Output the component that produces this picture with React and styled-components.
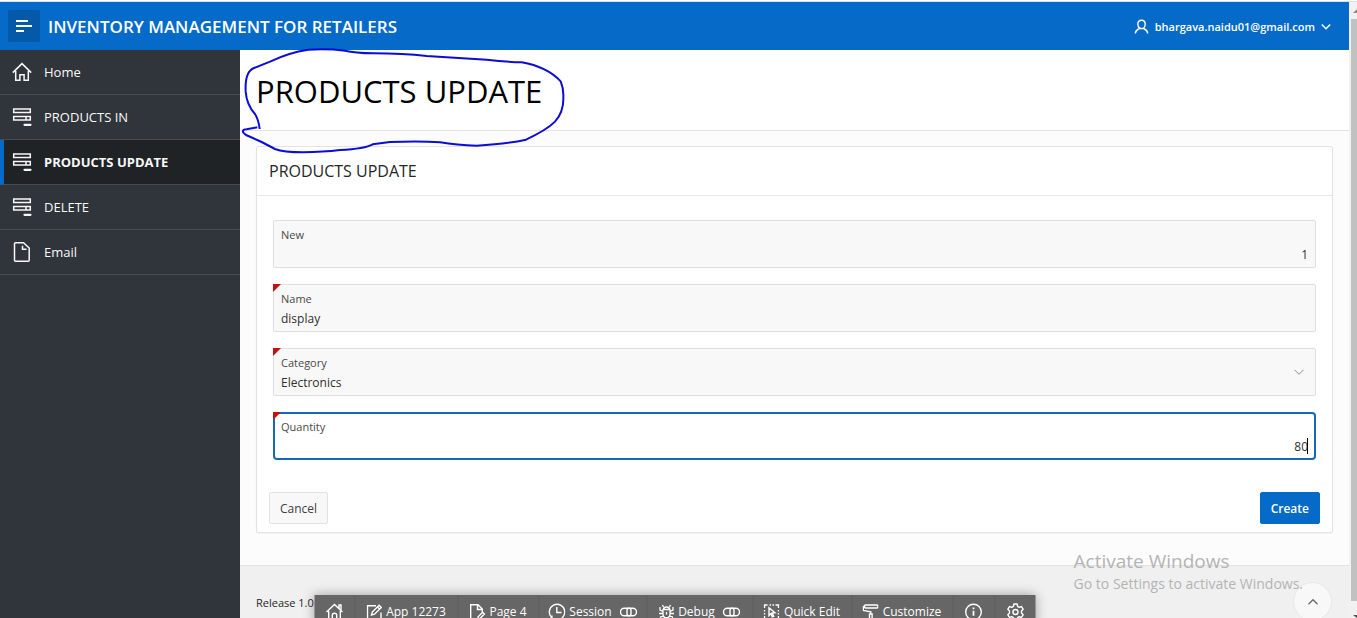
import React from "react";
import styled, { createGlobalStyle } from "styled-components";

const Global = createGlobalStyle`
  *, *::before, *::after { box-sizing: border-box; }
  html, body { margin: 0; height: 100%; overflow: hidden; }
  body { background: #fff; color: #262626; font: 12px/16px "Open Sans", "Noto Sans", sans-serif; }
  button, input, select { font: inherit; color: inherit; margin: 0; }
`;

const Window = styled.div`
  position: relative;
  display: flex;
  height: 100vh;
  overflow: hidden;
  border-top: 1px solid #fff;
`;

const Page = styled.div`
  position: relative;
  flex: 1;
  min-width: 0;
  display: flex;
  flex-direction: column;
  border-top: 1px solid #d5e2ef;
`;

const ScrollBar = styled.div`
  width: 8px;
  display: flex;
  flex-direction: column;
  align-items: flex-end;
  background: #f1f1f1;
  border-top: 1px solid #dcdcdc;
  overflow: hidden;
`;

const ScrollArrow = styled.svg`
  display: block;
  width: 6px;
  height: 17px;
  flex: none;
`;

const ScrollThumb = styled.div`
  width: 6px;
  flex: 1;
  background: #c1c1c1;
`;

const Header = styled.header`
  height: 48px;
  flex: none;
  display: flex;
  align-items: center;
  gap: 8px;
  padding: 0 18px 0 8px;
  background: #056ac8;
  color: #fff;
`;

const MenuButton = styled.button`
  width: 32px;
  height: 32px;
  padding: 0;
  display: grid;
  place-items: center;
  border: 0;
  border-radius: 2px;
  background: #0459a8;
  color: #fff;
`;

const AppTitle = styled.a`
  flex: 1;
  padding-top: 2px;
  color: #fff;
  text-decoration: none;
  font-size: 17px;
  line-height: 24px;
  font-weight: 600;
  white-space: nowrap;
`;

const UserButton = styled.button`
  display: flex;
  align-items: center;
  gap: 6px;
  padding: 2px 0 0;
  border: 0;
  background: none;
  color: #fff;
  font-size: 11px;
  font-weight: 600;
`;

const Body = styled.div`
  flex: 1;
  min-height: 0;
  display: flex;
`;

const Sidebar = styled.nav`
  width: 240px;
  flex: none;
  background: #30343b;
`;

const NavLink = styled.a`
  display: flex;
  align-items: center;
  gap: 12px;
  height: 45px;
  padding-left: ${(p) => (p.$active ? 8 : 12)}px;
  border-left: ${(p) => (p.$active ? "4px solid #056ac8" : "0")};
  border-bottom: 1px solid #484c52;
  background: ${(p) => (p.$active ? "#1f2326" : "transparent")};
  color: #f8f8f8;
  font-size: 13px;
  line-height: 20px;
  font-weight: ${(p) => (p.$active ? 700 : 500)};
  text-decoration: none;
`;

const Main = styled.main`
  position: relative;
  flex: 1;
  min-width: 0;
  display: flex;
  flex-direction: column;
  background: #fcfcfc;
`;

const TitleBar = styled.div`
  flex: none;
  height: 81px;
  display: flex;
  align-items: center;
  padding: 2px 16px 0;
  background: #fff;
  border-bottom: 1px solid #e3e3e3;
`;

const PageTitle = styled.h1`
  margin: 0;
  color: #000;
  font-size: 31px;
  line-height: 40px;
  font-weight: 500;
`;

const InkLoop = styled.svg`
  position: absolute;
  left: 0;
  top: -10px;
  width: 340px;
  height: 170px;
  pointer-events: none;
`;

const Content = styled.div`
  flex: none;
  padding: 15px 16px 32px;
`;

const Card = styled.section`
  background: #fff;
  border: 1px solid #e3e3e3;
  border-radius: 2px;
  box-shadow: 0 1px 2px rgba(0, 0, 0, 0.04);
`;

const CardTitle = styled.h2`
  margin: 0;
  padding: 12px;
  border-bottom: 1px solid #e8e8e8;
  font-size: 16px;
  line-height: 24px;
  font-weight: 500;
`;

const Fields = styled.form`
  display: flex;
  flex-direction: column;
  gap: 16px;
  padding: 24px 16px;
`;

const Field = styled.div`
  position: relative;
  height: 48px;
  display: flex;
  flex-direction: column;
  padding: ${(p) => (p.$focused ? "5px 6px 0" : "6px 7px 0")};
  border: ${(p) => (p.$focused ? "2px solid #1469b8" : "1px solid #dfdfdf")};
  border-radius: ${(p) => (p.$focused ? 4 : 2)}px;
  background: ${(p) => (p.$focused ? "#fff" : "#f8f8f8")};
`;

const RequiredMark = styled.span`
  position: absolute;
  left: ${(p) => (p.$focused ? -2 : -1)}px;
  top: ${(p) => (p.$focused ? -2 : -1)}px;
  border-top: 8px solid #c40f0f;
  border-right: 8px solid transparent;
`;

const Label = styled.label`
  font-size: 11px;
  line-height: 16px;
  color: #4a4a4a;
`;

const fieldControl = `
  width: 100%;
  height: 20px;
  margin-top: 2px;
  padding: 0;
  border: 0;
  outline: 0;
  background: transparent;
  appearance: none;
  font-size: 12px;
  line-height: 20px;
  color: #303030;
`;

const Input = styled.input`
  ${fieldControl}
  text-align: ${(p) => (p.$numeric ? "right" : "left")};
`;

const Select = styled.select`
  ${fieldControl}
`;

const SelectArrow = styled.svg`
  position: absolute;
  right: 11px;
  top: 19px;
  width: 10px;
  height: 8px;
  pointer-events: none;
`;

const Caret = styled.span`
  position: absolute;
  right: 6px;
  bottom: 4px;
  width: 1px;
  height: 16px;
  background: #000;
`;

const Actions = styled.div`
  display: flex;
  justify-content: space-between;
  padding: 8px 12px;
`;

const Button = styled.button`
  height: 32px;
  min-width: 59px;
  padding: 2px 10px 0;
  border: 1px solid ${(p) => (p.$primary ? "#056ac8" : "#e2e2e2")};
  border-radius: 2px;
  background: ${(p) => (p.$primary ? "#056ac8" : "#f8f8f8")};
  color: ${(p) => (p.$primary ? "#fff" : "#404040")};
  font-weight: ${(p) => (p.$primary ? 600 : 400)};
`;

const Footer = styled.footer`
  flex: 1 0 auto;
  padding: 29px 16px;
  background: #f0f0f0;
  border-top: 1px solid #e2e2e2;
  font-size: 11px;
`;

const TopButton = styled.button`
  position: absolute;
  right: 17px;
  bottom: -3px;
  width: 39px;
  height: 39px;
  padding: 0;
  display: grid;
  place-items: center;
  border: 1px solid #e8e8e8;
  border-radius: 50%;
  background: #f8f8f8;
  color: #6a6a6a;
`;

const Watermark = styled.div`
  position: absolute;
  right: 46px;
  bottom: 24px;
  color: #b4b4b4;
  font-size: 14px;
  line-height: 20px;
  white-space: nowrap;
  pointer-events: none;
`;

const WatermarkTitle = styled.div`
  font-size: 19px;
  line-height: 26px;
`;

const DevBar = styled.div`
  position: absolute;
  left: 50%;
  bottom: -10px;
  transform: translateX(-50%);
  display: flex;
  height: 33px;
  background: #666;
  box-shadow: 0 0 12px rgba(0, 0, 0, 0.35);
`;

const DevButton = styled.button`
  display: flex;
  align-items: center;
  justify-content: center;
  gap: 4px;
  min-width: ${(p) => p.$width}px;
  padding: 0;
  border: 0;
  border-right: 1px solid #5c5c5c;
  background: none;
  color: #fff;
  font-weight: 500;
  white-space: nowrap;
  &:last-child { border-right: 0; }
`;

const ToggleSlot = styled.span`
  display: flex;
  margin-left: 4px;
`;

const Svg = ({ w = 18, h = w, sw = 1, children }) => (
  <svg width={w} height={h} viewBox={`0 0 ${w} ${h}`} fill="none" stroke="currentColor" strokeWidth={sw} aria-hidden="true">
    {children}
  </svg>
);

const HomeIcon = () => (
  <Svg w={20} sw={1.5}>
    <path d="M.8 10.6 10 1.6l9.2 9M3.7 9v9.3h4.2v-5.600h4.200v5.600h4.200V9" />
  </Svg>
);

const FormIcon = () => (
  <Svg w={20} sw={1.5}>
    <path d="M1.700 2h16.600v3.600H1.700zM1.700 9.600h16.600v3.400H1.700zM14 9.600V13" />
    <path d="M12.500 17.800h6" strokeWidth="2.2" strokeLinecap="round" />
  </Svg>
);

const FileIcon = () => (
  <Svg w={20} sw={1.5}>
    <path d="M3.500 .8h8L17.200 6v12.200q0 1-1 1H3.500q-1 0-1-1V1.800q0-1 1-1z" />
    <path d="M10.500 3.800v3.400h4" />
  </Svg>
);

const UserIcon = () => (
  <Svg w={15} h={16} sw={1.4}>
    <path d="M7.500 1.200c2.300 0 3.700 1.500 3.700 3.800 0 2.500-1.500 4.600-3.700 4.600S3.800 7.500 3.800 5c0-2.300 1.400-3.800 3.700-3.800zM5.500 9.300C3.500 10.300 1.500 11 1.300 14.500M9.500 9.300c2 1 4 1.700 4.200 5.200" />
  </Svg>
);

const DevHome = () => (
  <Svg sw={1.4}>
    <path d="m1 9 8-7.500L17 9M13.500 5.500V2h2v5.500M3.200 8v9.200h3.600v-5q0-2 2.200-2t2.200 2v5h3.600V8" />
  </Svg>
);

const EditIcon = () => (
  <Svg w={16} sw={1.4}>
    <path d="M9.500 1.700H1v13.500h13.500V8.500M5 11l.8-3 6.800-6.800 2.200 2.200L8 10.200zM11 3l2 2" />
  </Svg>
);

const PageIcon = () => (
  <Svg w={16} sw={1.4}>
    <path d="M6.500 15.300H1.200V.8h7.300L12.800 5v3M8 1v4.500h4.500M8 15.300l.6-2.500 4.500-4.500 1.800 1.800-4.500 4.500z" />
  </Svg>
);

const SessionIcon = () => (
  <Svg w={18} sw={1.4}>
    <path d="M4.200 14.600A7.700 7.700 0 1 1 8 16.600M9.300 4v5.500H14M1 16.800h3.400v-4.300" />
  </Svg>
);

const BugIcon = () => (
  <Svg w={16} sw={1.3}>
    <path d="M4.500 5.500h7V10q0 3.800-3.500 3.800T4.500 10zM5 5.500Q5 3 8 3t3 2.500M5 3 4 1M11 3l1-2M4.500 7.500 1.500 6V3M11.500 7.500l3-1.500V3M4.500 9.500H.5M11.500 9.500h4M5 12l-3 1v2.500M11 12l3 1v2.500M8 8v2.500" />
  </Svg>
);

const ToggleIcon = () => (
  <ToggleSlot>
    <Svg w={18} h={10} sw={1.4}>
      <rect x="1" y="1.2" width="16" height="7.6" rx="3.8" />
      <rect x="7.5" y="1.2" width="4" height="7.6" rx="2" />
    </Svg>
  </ToggleSlot>
);

const QuickEditIcon = () => (
  <Svg w={16} sw={1.4}>
    <path d="M1 4V1h3M6 1h1.500M9 1h1.500M12 1h3v3M1 6v1.500M1 9v1.500M1 12v3h3M15 6v1.500M15 9v1.500M12 15h3v-3" />
    <path d="m5.500 3.800 6 5-2.800.3 1.500 3.200-1.400.6-1.400-3.200-1.900 1.800z" />
  </Svg>
);

const RollerIcon = () => (
  <Svg w={16} sw={1.4}>
    <path d="M3 1h11.500q1 0 1 1.500t-1 1.500H3Q2 4 2 2.500T3 1zM2 2.500H.8v4l7.500 1.300V10M7 10h2.600v6H7z" />
  </Svg>
);

const InfoIcon = () => (
  <Svg w={18} sw={1.4}>
    <circle cx="9" cy="9" r="7.8" />
    <path d="M9 7.800v5M9 4.600v1.700" strokeWidth="1.8" />
  </Svg>
);

const GearIcon = () => (
  <Svg w={18} sw={1.4}>
    <path d="m7.400 1-.5 2.300-1.700 1L3 3.500 1.300 6.300 3 7.900v2.200l-1.700 1.600L3 14.500l2.200-.8 1.700 1 .5 2.300h3.200l.5-2.300 1.700-1 2.200.8 1.700-2.800-1.700-1.600V7.900l1.700-1.600L15 3.500l-2.200.8-1.700-1L10.600 1z" strokeLinejoin="round" />
    <circle cx="9" cy="9" r="2.5" />
  </Svg>
);

const NAV = [
  ["Home", HomeIcon],
  ["PRODUCTS IN", FormIcon],
  ["PRODUCTS UPDATE", FormIcon],
  ["DELETE", FormIcon],
  ["Email", FileIcon],
];

const DEV = [
  { name: "Home", width: 41, icon: DevHome, iconOnly: true },
  { name: "App 12273", width: 103, icon: EditIcon },
  { name: "Page 4", width: 81, icon: PageIcon },
  { name: "Session", width: 108, icon: SessionIcon, toggle: true },
  { name: "Debug", width: 106, icon: BugIcon, toggle: true },
  { name: "Quick Edit", width: 99, icon: QuickEditIcon },
  { name: "Customize", width: 101, icon: RollerIcon },
  { name: "Info", width: 42, icon: InfoIcon, iconOnly: true },
  { name: "Settings", width: 40, icon: GearIcon, iconOnly: true },
];

export default function App() {
  return (
    <>
      <Global />
      <Window>
        <Page>
          <Header>
            <MenuButton aria-label="Toggle navigation">
              <Svg w={16} sw={2}>
                <path d="M0 3h12M0 8h16M0 13h8" />
              </Svg>
            </MenuButton>
            <AppTitle href="#">INVENTORY MANAGEMENT FOR RETAILERS</AppTitle>
            <UserButton>
              <UserIcon />
              bhargava.naidu01@gmail.com
              <Svg w={10} h={8} sw={1.5}>
                <path d="m.8 1.500 4.200 4.200 4.200-4.200" />
              </Svg>
            </UserButton>
          </Header>
          <Body>
            <Sidebar>
              {NAV.map(([name, Icon], i) => (
                <NavLink key={name} href="#" $active={i === 2}>
                  <Icon />
                  {name}
                </NavLink>
              ))}
            </Sidebar>
            <Main>
              <TitleBar>
                <PageTitle>PRODUCTS UPDATE</PageTitle>
              </TitleBar>
              <Content>
                <Card>
                  <CardTitle>PRODUCTS UPDATE</CardTitle>
                  <Fields>
                    <Field>
                      <Label htmlFor="new">New</Label>
                      <Input id="new" $numeric defaultValue="1" />
                    </Field>
                    <Field>
                      <RequiredMark />
                      <Label htmlFor="name">Name</Label>
                      <Input id="name" defaultValue="display" />
                    </Field>
                    <Field>
                      <RequiredMark />
                      <Label htmlFor="category">Category</Label>
                      <Select id="category" defaultValue="Electronics">
                        <option>Electronics</option>
                      </Select>
                      <SelectArrow viewBox="0 0 10 8" fill="none" stroke="#8c8c8c" aria-hidden="true">
                        <path d="m.5 1.800 4.500 4.500 4.500-4.500" />
                      </SelectArrow>
                    </Field>
                    <Field $focused>
                      <RequiredMark $focused />
                      <Label htmlFor="quantity">Quantity</Label>
                      <Input id="quantity" $numeric defaultValue="80" />
                      <Caret />
                    </Field>
                  </Fields>
                  <Actions>
                    <Button>Cancel</Button>
                    <Button $primary>Create</Button>
                  </Actions>
                </Card>
              </Content>
              <Footer>Release 1.0</Footer>
              <InkLoop viewBox="0 0 1020 510" fill="none" stroke="#0c0cd4" strokeWidth="6" strokeLinejoin="round" aria-hidden="true">
                <path d="M59 267Q56 240 45 222Q20 195 17 155Q14 95 42 84L92 64Q145 38 205 29Q265 26 315 32Q345 39 400 40Q490 40 560 48L740 59Q800 66 845 67Q920 80 962 124Q971 145 970 170Q972 215 945 245Q920 270 858 299Q800 312 710 317Q650 316 600 307Q540 302 450 306L398 313Q375 326 300 330Q250 336 190 337Q130 337 105 327L65 306L18 285Q-2 270 20 268L52 262" />
              </InkLoop>
            </Main>
          </Body>
          <TopButton aria-label="Back to top">
            <Svg w={12} h={8} sw={1.3}>
              <path d="m1.500 6.200 4.500-4.500 4.500 4.500" />
            </Svg>
          </TopButton>
          <Watermark>
            <WatermarkTitle>Activate Windows</WatermarkTitle>
            Go to Settings to activate Windows.
          </Watermark>
          <DevBar>
            {DEV.map(({ name, width, icon: Icon, iconOnly, toggle }) => (
              <DevButton key={name} $width={width} aria-label={name}>
                <Icon />
                {!iconOnly && name}
                {toggle && <ToggleIcon />}
              </DevButton>
            ))}
          </DevBar>
        </Page>
        <ScrollBar aria-hidden="true">
          <ScrollArrow viewBox="0 0 6 17">
            <path d="m2 11 4-4v4z" fill="#8a8a8a" />
          </ScrollArrow>
          <ScrollThumb />
          <ScrollArrow viewBox="0 0 6 17">
            <path d="M2 14h4v3z" fill="#505050" />
          </ScrollArrow>
        </ScrollBar>
      </Window>
    </>
  );
}
